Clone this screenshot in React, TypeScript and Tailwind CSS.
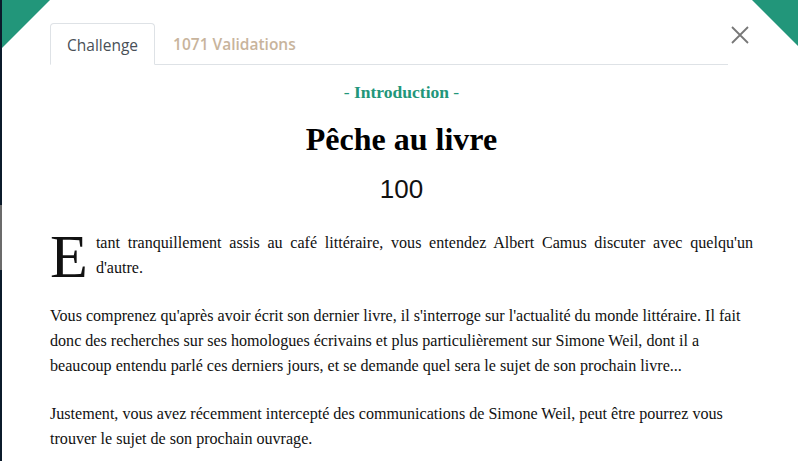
import React from 'react';

const serif = { fontFamily: '"Liberation Serif", "Times New Roman", serif' };

const App: React.FC = () => {
  return (
    <div className="relative flex h-[461px] w-[798px] overflow-hidden bg-[#0b1b2b]">
      {/* backdrop strip on the far left */}
      <div className="flex w-[2px] flex-col">
        <div className="h-[205px] bg-[#0b1b2b]" />
        <div className="h-[65px] bg-[#6b6b6b]" />
        <div className="flex-1 bg-[#0b1b2b]" />
      </div>

      {/* modal */}
      <div className="relative flex-1 bg-white">
        {/* corner ribbons */}
        <div className="absolute left-0 top-0 h-[48px] w-[48px] bg-[#22967a] [clip-path:polygon(0_0,100%_0,0_100%)]" />
        <div className="absolute right-0 top-0 h-[46px] w-[46px] bg-[#22967a] [clip-path:polygon(0_0,100%_0,100%_100%)]" />

        <button className="absolute left-[727px] top-[24px] flex h-[22px] w-[22px] items-center justify-center text-[#777]">
          <svg width="18" height="18" viewBox="0 0 18 18" fill="none" stroke="currentColor" strokeWidth="1.8">
            <path d="M1 1L17 17M17 1L1 17" />
          </svg>
        </button>

        <div className="pl-[48px] pr-[45px] pt-[23px]">
          {/* tabs */}
          <div
            className="mr-[25px] flex border-b border-[#dee2e6] text-[15.5px]"
            style={{ fontFamily: '"Open Sans", "Noto Sans", sans-serif' }}
          >
            <div className="-mb-px rounded-t-[4px] border border-[#dee2e6] border-b-white bg-white px-[16px] pb-[7px] pt-[10px] text-[#495057]">
              Challenge
            </div>
            <div className="px-[18px] pb-[7px] pt-[10px] font-semibold text-[#c8b49c]">1071 Validations</div>
          </div>

          {/* header */}
          <div className="mt-[15px] text-center text-[17.5px] leading-[24px] text-[#22967a]" style={serif}>
            - <span className="font-bold">Introduction</span> -
          </div>
          <h1 className="mt-[16px] text-center text-[32px] font-bold leading-[38px] text-black" style={serif}>
            Pêche au livre
          </h1>
          <div
            className="mt-[16px] text-center text-[26px] leading-[30px] text-[#111]"
            style={{ fontFamily: '"Liberation Sans", Arial, sans-serif' }}
          >
            100
          </div>

          {/* body */}
          <div className="mt-[26px] text-[16.1px] leading-[25px] text-[#111]" style={serif}>
            <p className="flow-root text-justify">
              <span className="float-left mr-[8px] mt-[4px] text-[62px] leading-[44px]">E</span>
              tant tranquillement assis au café littéraire, vous entendez Albert Camus discuter avec quelqu'un
              d'autre.
            </p>
            <p className="mt-[23px]">
              Vous comprenez qu'après avoir écrit son dernier livre, il s'interroge sur l'actualité du monde littéraire. Il
              fait donc des recherches sur ses homologues écrivains et plus particulièrement sur Simone Weil, dont il a
              beaucoup entendu parlé ces derniers jours, et se demande quel sera le sujet de son prochain livre...
            </p>
            <p className="mt-[23px]">
              Justement, vous avez récemment intercepté des communications de Simone Weil, peut être pourrez vous
              trouver le sujet de son prochain ouvrage.
            </p>
          </div>
        </div>
      </div>
    </div>
  );
};

export default App;
